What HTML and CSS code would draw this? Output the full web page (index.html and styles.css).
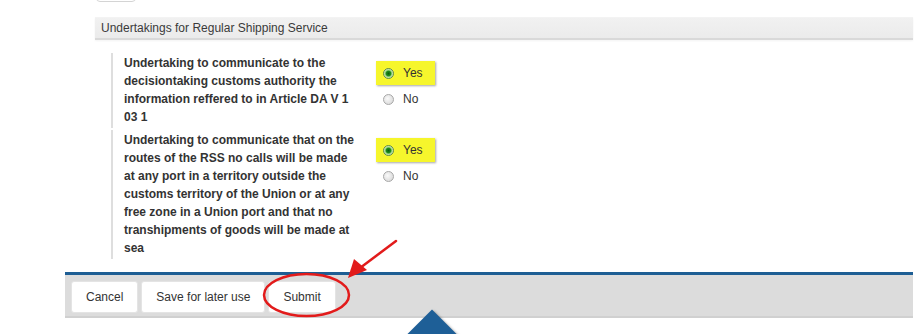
FILE: index.html
```html
<!DOCTYPE html>
<html>
<head>
    <meta charset="UTF-8" />
    <title>Regular Shipping Service</title>
    <link rel="stylesheet" href="styles.css">
</head>
<body>
    <div class="page">
        <div class="prev-button"></div>

        <div class="section-head">Undertakings for Regular Shipping Service</div>

        <div class="questions">
            <div class="question">
                <div class="question-text">Undertaking to communicate to the decisiontaking customs authority the information reffered to in Article DA V 1 03 1</div>
                <div class="options">
                    <label class="option is-selected"><span class="radio is-checked"></span>Yes</label>
                    <label class="option"><span class="radio"></span>No</label>
                </div>
            </div>
            <div class="question">
                <div class="question-text">Undertaking to communicate that on the routes of the RSS no calls will be made at any port in a territory outside the customs territory of the Union or at any free zone in a Union port and that no transhipments of goods will be made at sea</div>
                <div class="options">
                    <label class="option is-selected"><span class="radio is-checked"></span>Yes</label>
                    <label class="option"><span class="radio"></span>No</label>
                </div>
            </div>
        </div>

        <div class="footer">
            <button class="btn">Cancel</button>
            <button class="btn">Save for later use</button>
            <button class="btn">Submit</button>
        </div>
    </div>

    <!-- blue marker peeking in at the bottom -->
    <div class="marker"></div>

    <!-- red annotation: circle round Submit and the arrow -->
    <svg class="annotation" width="920" height="334" viewBox="0 0 920 334">
        <ellipse cx="306.5" cy="295" rx="42.5" ry="21" fill="none" stroke="#e21b1b" stroke-width="2.5"/>
        <line x1="396" y1="241" x2="360" y2="268" stroke="#e21b1b" stroke-width="2.5" stroke-linecap="round"/>
        <polygon points="348,278 354,259 367,270" fill="#e21b1b"/>
    </svg>
</body>
</html>
```

FILE: styles.css
```css
* {
    box-sizing: border-box;
}
html {
    overflow: hidden;
}
body {
    margin: 0;
    width: 920px;
    height: 334px;
    overflow: hidden;
    position: relative;
    background: #fff;
    font-family: "Liberation Sans", Arial, sans-serif;
    font-size: 12px;
    color: #333;
}
.page {
    margin-left: 65px;
    width: 848px;
}

/* bottom edge of a button above the visible area */
.prev-button {
    margin-left: 31px;
    width: 40px;
    height: 5px;
    margin-top: -3px;
    border: 1px solid #d4d4d4;
    border-radius: 0 0 4px 4px;
}

/* section title bar */
.section-head {
    margin-top: 15px;
    margin-left: 30px;
    height: 23px;
    padding-left: 6px;
    line-height: 21px;
    color: #3a3a3a;
    background: linear-gradient(#f1f1f1, #ebebeb);
    border-top: 1px solid #f3f3f3;
    border-bottom: 2px solid #d9d9d9;
    box-shadow: 0 1px 2px rgba(0,0,0,0.05);
}

.questions {
    margin-top: 13px;
    margin-left: 46px;
    display: flex;
    flex-direction: column;
    gap: 2px;
}
.question {
    display: flex;
    border-left: 2px solid #dedede;
    padding: 1px 0 2px 11px;
}
.question-text {
    width: 230px;
    font-weight: bold;
    line-height: 18px;
    color: #333;
}
.options {
    margin-left: 22px;
    margin-top: 7px;
    display: flex;
    flex-direction: column;
    align-items: flex-start;
    gap: 2px;
}
.option {
    display: flex;
    align-items: center;
    gap: 9px;
    height: 24px;
    padding: 0 12px 0 7px;
    color: #333;
}
.option.is-selected {
    background: #f6f62c;
    box-shadow: 1px 1px 2px rgba(0,0,0,0.35);
}
.radio {
    width: 11px;
    height: 11px;
    border-radius: 50%;
    border: 1px solid #a8a8a8;
    background: radial-gradient(circle at 40% 40%, #fafafa, #d2d2d2);
}
.radio.is-checked {
    border-color: #5c8a4a;
    background: radial-gradient(circle, #0a5e0a 0, #1f8f1f 2.4px, #9fd584 3.4px, #e6f5dc 5px);
}

/* action bar */
.footer {
    margin-top: 13px;
    display: flex;
    gap: 3px;
    padding: 6px 6px 3px;
    background: #dcdcdc;
    border-top: 3px solid #1e5e94;
    border-bottom: 2px solid #d0d0d0;
}
.btn {
    height: 32px;
    padding: 0 14px;
    font-family: inherit;
    font-size: 12px;
    color: #333;
    background: #fff;
    border: 1px solid #e4e4e4;
    border-radius: 3px;
}

.marker {
    position: absolute;
    left: 409px;
    top: 319px;
    width: 46px;
    height: 46px;
    background: #1e5f97;
    transform: rotate(45deg);
    box-shadow: 2px 0 3px rgba(0,0,0,0.4);
}
.annotation {
    position: absolute;
    left: 0;
    top: 0;
    pointer-events: none;
}
```
